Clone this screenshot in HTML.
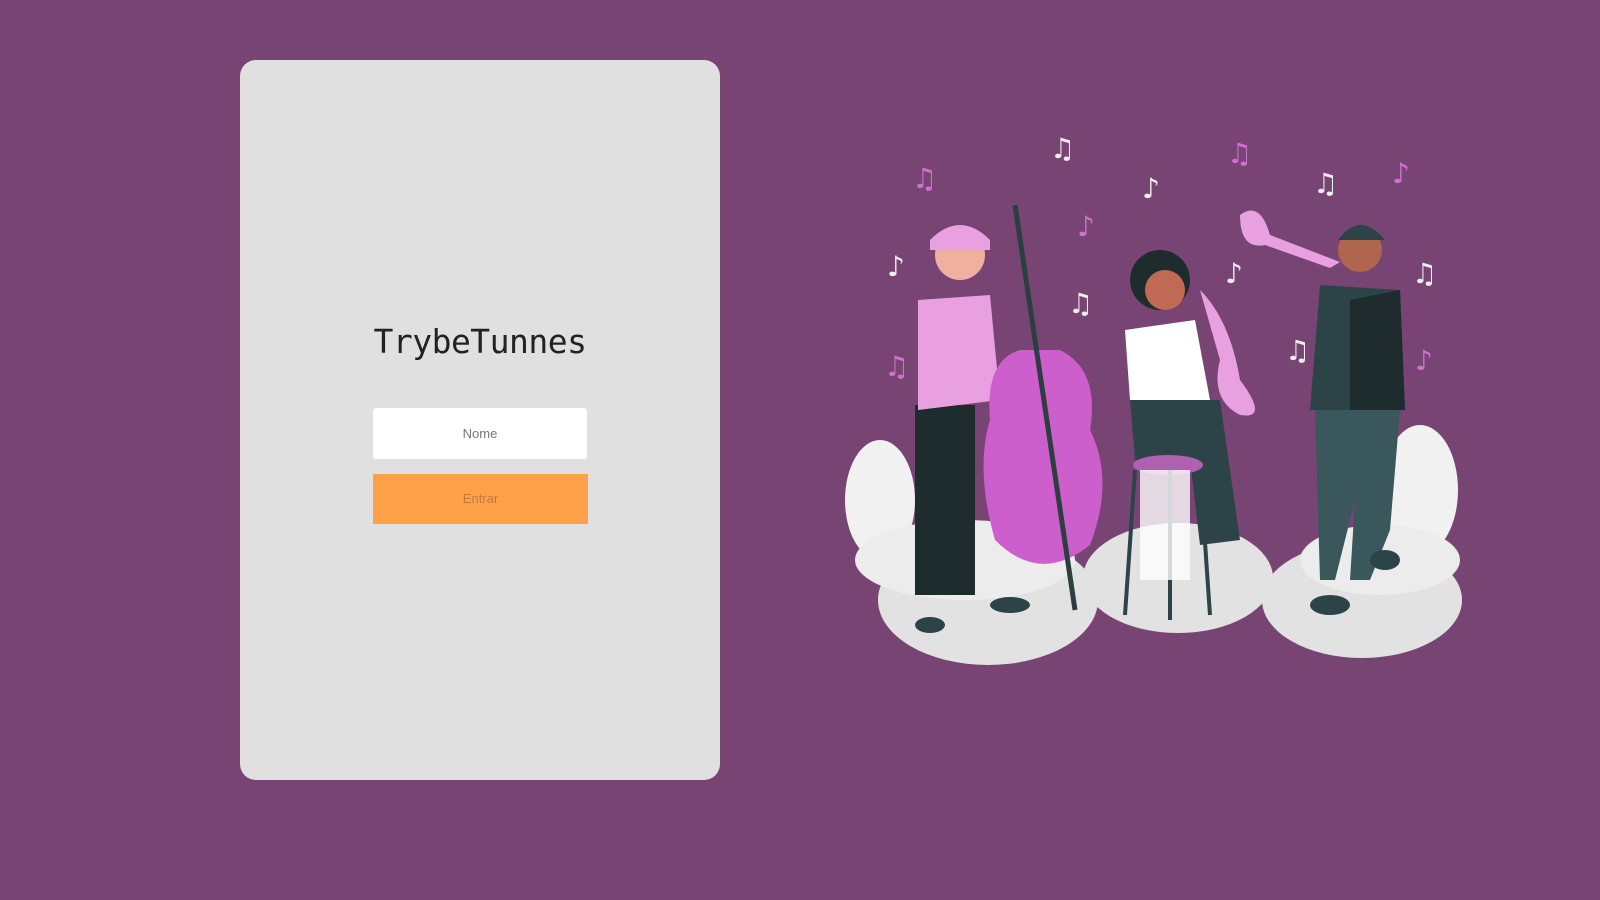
<!DOCTYPE html>
<html><head><meta charset="utf-8"><style>
html,body{margin:0;padding:0;width:1600px;height:900px;background:#784474;overflow:hidden;font-family:"Liberation Sans",sans-serif}
.card{position:absolute;left:240px;top:60px;width:480px;height:720px;background:#e0e0e0;border-radius:16px}
h1{position:absolute;left:0;width:480px;top:262px;margin:0;text-align:center;font:400 33px "DejaVu Sans Mono",monospace;color:#222;letter-spacing:-0.5px;line-height:40px}
.in{position:absolute;left:133px;top:348px;width:214px;height:51px;background:#fff;border-radius:3px;text-align:center;line-height:51px;font-size:13px;color:#777}
.bt{position:absolute;left:133px;top:414px;width:215px;height:50px;background:#ffa149;text-align:center;line-height:50px;font-size:13px;color:#c07a3a}
svg{position:absolute;left:0;top:0}
</style></head><body>
<div class="card"><h1>TrybeTunnes</h1><div class="in">Nome</div><div class="bt">Entrar</div></div>
<svg width="1600" height="900">
<g fill="#f1f1f1"><ellipse cx="880" cy="500" rx="35" ry="60"/><ellipse cx="1420" cy="490" rx="38" ry="65"/></g>
<g fill="#e2e2e2"><ellipse cx="988" cy="600" rx="110" ry="65"/><ellipse cx="1178" cy="578" rx="95" ry="55"/><ellipse cx="1362" cy="600" rx="100" ry="58"/></g>
<g fill="#ececec"><ellipse cx="965" cy="560" rx="110" ry="40"/><ellipse cx="1380" cy="560" rx="80" ry="35"/></g>
<rect x="915" y="405" width="60" height="190" fill="#1e2c2e"/>
<path d="M918 300 L990 295 L1000 400 L918 410 Z" fill="#e8a0e0"/>
<circle cx="960" cy="255" r="25" fill="#f0b0a0"/><path d="M930 240 Q960 210 990 240 L990 250 L930 250Z" fill="#e8a0e0"/>
<ellipse cx="930" cy="625" rx="15" ry="8" fill="#2c4448"/><ellipse cx="1010" cy="605" rx="20" ry="8" fill="#2c4448"/>
<path d="M1020 350 Q985 360 990 420 Q975 470 995 540 Q1040 585 1090 545 Q1115 480 1090 430 Q1100 370 1060 350 Z" fill="#cc5fcc"/>
<line x1="1015" y1="205" x2="1075" y2="610" stroke="#2c3e40" stroke-width="5"/>
<circle cx="1160" cy="280" r="30" fill="#1e2c2e"/><circle cx="1165" cy="290" r="20" fill="#c06a55"/>
<path d="M1125 330 L1195 320 L1210 400 L1130 400 Z" fill="#fff"/>
<path d="M1130 400 L1220 400 L1240 540 L1200 545 L1190 460 L1135 460 Z" fill="#2c4448"/>
<ellipse cx="1168" cy="465" rx="35" ry="10" fill="#b060b0"/>
<path d="M1135 470 L1125 615 M1200 470 L1210 615 M1170 470 L1170 620" stroke="#2c4448" stroke-width="4" fill="none"/>
<rect x="1140" y="470" width="50" height="110" fill="#fff" opacity=".8"/>
<path d="M1200 290 Q1230 320 1240 380 Q1270 420 1240 415 Q1210 400 1220 360Z" fill="#e8a0e0"/>
<circle cx="1360" cy="250" r="22" fill="#b0654f"/><path d="M1338 240 Q1360 210 1385 240Z" fill="#2c4448"/>
<path d="M1320 285 L1400 290 L1405 410 L1310 410 Z" fill="#2c4448"/>
<path d="M1350 300 L1400 290 L1405 410 L1350 410Z" fill="#1e2c2e"/>
<path d="M1315 410 L1400 410 L1390 530 L1370 580 L1350 580 L1355 500 L1335 580 L1320 580 Z" fill="#3a585c"/>
<ellipse cx="1330" cy="605" rx="20" ry="10" fill="#2c4448"/><ellipse cx="1385" cy="560" rx="15" ry="10" fill="#2c4448"/>
<path d="M1240 215 Q1260 200 1270 235 L1340 262 L1330 268 L1265 245 Q1240 250 1240 215Z" fill="#e8a0e0"/>
<g font-family="DejaVu Sans" font-size="28">
<text x="912" y="188" fill="#d070d0">♫</text><text x="1050" y="158" fill="#eee">♫</text><text x="1142" y="198" fill="#eee">♪</text>
<text x="1227" y="163" fill="#d070d0">♫</text><text x="1313" y="193" fill="#eee">♫</text><text x="1392" y="183" fill="#d070d0">♪</text>
<text x="887" y="276" fill="#eee">♪</text><text x="1077" y="236" fill="#d070d0">♪</text><text x="1068" y="313" fill="#eee">♫</text>
<text x="1225" y="283" fill="#eee">♪</text><text x="1285" y="360" fill="#eee">♫</text><text x="1412" y="283" fill="#eee">♫</text>
<text x="884" y="376" fill="#d070d0">♫</text><text x="1415" y="370" fill="#d070d0">♪</text></g>
</svg>
</body></html>
